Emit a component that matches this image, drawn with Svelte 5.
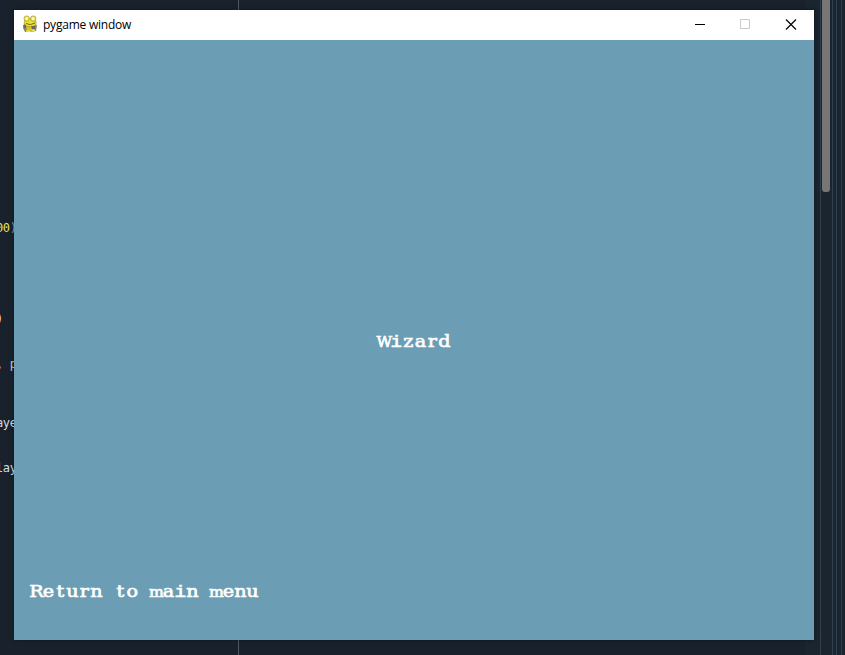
<script>
  const codeLines = [
    { top: 220, left: -4, text: '00', color: '#e6e05c', tail: ')', tailColor: '#8fa3ae' },
    { top: 311, left: -4, text: ')', color: '#f0d9b0' },
    { top: 356, left: -4, text: ',', color: '#e0a860', tail: ' p', tailColor: '#c3cdd3' },
    { top: 415, left: -4, text: 'aye', color: '#d5dce0' },
    { top: 460, left: -4, text: 'l', color: '#e9c9a4', tail: 'ay', tailColor: '#d5dce0' }
  ];
  const rulers = [820, 832, 836, 841];
  const cells = (text) => [...text].map((_, i) => 5.3 + i * 10).join(' ');
</script>

<div class="desktop">
  <div class="gutter"></div>
  {#each rulers as x}
    <div class="ruler" style="left: {x}px"></div>
  {/each}
  <div class="guide"></div>
  <div class="scrollbar"></div>
  {#each codeLines as line}
    <div class="code" style="top: {line.top}px; left: {line.left}px; color: {line.color}">{line.text}{#if line.tail}<span style="color: {line.tailColor}">{line.tail}</span>{/if}</div>
  {/each}

  <section class="window">
    <header>
      <svg class="logo" width="16" height="18" viewBox="0 0 16 18">
        <path d="M2 9 1 13l2 4h3l1-2 2 2 5-1 1-5-2-3z" fill="#88866a" />
        <path d="M4 10h8l1 4-3 3-5-1z" fill="#d6c822" />
        <path d="M3 5 2 8l2 3 5 1 5-2V6l-2-2H5z" fill="#ede42a" stroke="#a59a25" stroke-width=".7" />
        <circle cx="4.7" cy="3.6" r="2.7" fill="#f0e74a" stroke="#aaa035" stroke-width=".8" />
        <circle cx="11.2" cy="3.6" r="2.7" fill="#f0e74a" stroke="#aaa035" stroke-width=".8" />
        <circle cx="4.8" cy="3.7" r="1.2" fill="#fffde0" />
        <circle cx="11" cy="3.7" r="1.2" fill="#fffde0" />
        <path d="M4 8.5q4 2.5 9-.5" fill="none" stroke="#6f6729" />
        <path d="M1 10h3v3H2zM9 11h4v3h-3z" fill="#66686b" />
        <path d="M4 16h3M10 15.5h3" stroke="#eee34a" stroke-width="1.5" />
      </svg>
      <span class="title">pygame window</span>
      <div class="controls">
        <svg width="45" height="30"><path d="M17 14.5h10" stroke="#000" /></svg>
        <svg width="45" height="30"><path d="M17.500 9.500h9v9h-9z" fill="none" stroke="#c9c9c9" /></svg>
        <svg width="45" height="30"><path d="m18 9.500 10 10m0-10-10 10" stroke="#000" stroke-width="1.15" /></svg>
      </div>
    </header>
    <main>
      <svg class="label wizard" width="72" height="24"><text transform="scale(1.2 1)" x={cells('Wizard')} y="18"><tspan class="wide-cap">W</tspan><tspan class="slab">i</tspan>zard</text></svg>
      <svg class="label back" width="228" height="24"><text transform="scale(1.2 1)" x={cells('Return to main menu')} y="18">Return to <tspan class="narrow">m</tspan>a<tspan class="slab">i</tspan>n <tspan class="narrow">m</tspan>enu</text></svg>
    </main>
  </section>
</div>

<style>
  .desktop {
    position: relative;
    width: 845px;
    height: 655px;
    overflow: hidden;
    background: #19222c;
  }
  .gutter {
    position: absolute;
    left: 805px;
    top: 0;
    width: 40px;
    height: 655px;
    background: #1a252f;
  }
  .ruler {
    position: absolute;
    top: 0;
    width: 1px;
    height: 655px;
    background: #30414d;
  }
  .guide {
    position: absolute;
    left: 238px;
    top: 0;
    width: 1px;
    height: 655px;
    background: #505860;
  }
  .scrollbar {
    position: absolute;
    left: 822px;
    top: -6px;
    width: 8px;
    height: 198px;
    border-radius: 3px;
    background: #777575;
  }
  .code {
    position: absolute;
    font: 12px/16px 'DejaVu Sans Mono', monospace;
    letter-spacing: -0.4px;
    white-space: pre;
  }
  .window {
    position: absolute;
    left: 14px;
    top: 10px;
    width: 800px;
    height: 630px;
    display: flex;
    flex-direction: column;
    box-shadow: 0 0 5px rgba(0, 0, 0, 0.35);
  }
  header {
    height: 30px;
    display: flex;
    align-items: center;
    padding: 0 1px 0 8px;
    box-sizing: border-box;
    background: #fff;
  }
  .logo {
    margin-top: -2px;
  }
  .title {
    margin-left: 5px;
    font: 12px/16px 'Open Sans', sans-serif;
    letter-spacing: -0.22px;
    color: #000;
  }
  .controls {
    display: flex;
    margin-left: auto;
  }
  main {
    flex: 1;
    display: flex;
    flex-direction: column;
    padding: 289px 16px 0;
    background: #6b9eb5;
  }
  .label {
    display: block;
    overflow: visible;
    font: 16px 'DejaVu Serif', serif;
    fill: #fff;
    stroke: #fff;
    stroke-width: 0.6px;
    text-anchor: middle;
  }
  .narrow {
    font-size: 14.5px;
    font-stretch: condensed;
  }
  .wide-cap {
    font-size: 14px;
    font-stretch: condensed;
  }
  .slab {
    font: 16px 'Liberation Mono', monospace;
  }
  .wizard {
    align-self: center;
  }
  .back {
    margin-top: 226px;
  }
</style>
